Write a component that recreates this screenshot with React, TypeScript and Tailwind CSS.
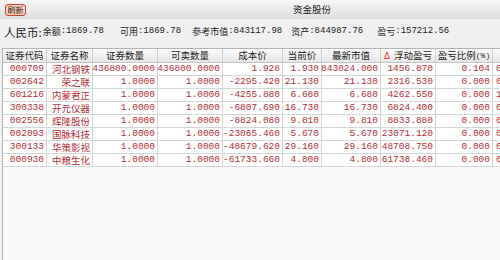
import React from 'react';

type Row = {
  code: string;
  name: string;
  qty: string;
  sellable: string;
  cost: string;
  price: string;
  value: string;
  pnl: string;
  ratio: string;
  market: string;
};

const ROWS: Row[] = [
  { code: '000709', name: '河北钢铁', qty: '436800.0000', sellable: '436800.0000', cost: '1.928', price: '1.930', value: '843024.000', pnl: '1456.870', ratio: '0.104', market: '0' },
  { code: '002642', name: '荣之联', qty: '1.0000', sellable: '1.0000', cost: '-2295.420', price: '21.130', value: '21.130', pnl: '2316.530', ratio: '0.000', market: '0' },
  { code: '601216', name: '内蒙君正', qty: '1.0000', sellable: '1.0000', cost: '-4255.880', price: '6.680', value: '6.680', pnl: '4262.550', ratio: '0.000', market: '1' },
  { code: '300338', name: '开元仪器', qty: '1.0000', sellable: '1.0000', cost: '-6807.690', price: '16.730', value: '16.730', pnl: '6824.400', ratio: '0.000', market: '0' },
  { code: '002556', name: '辉隆股份', qty: '1.0000', sellable: '1.0000', cost: '-8824.080', price: '9.810', value: '9.810', pnl: '8833.880', ratio: '0.000', market: '0' },
  { code: '002093', name: '国脉科技', qty: '1.0000', sellable: '1.0000', cost: '-23065.460', price: '5.670', value: '5.670', pnl: '23071.120', ratio: '0.000', market: '0' },
  { code: '300133', name: '华策影视', qty: '1.0000', sellable: '1.0000', cost: '-48679.620', price: '29.160', value: '29.160', pnl: '48708.750', ratio: '0.000', market: '0' },
  { code: '000930', name: '中粮生化', qty: '1.0000', sellable: '1.0000', cost: '-61733.660', price: '4.800', value: '4.800', pnl: '61738.460', ratio: '0.000', market: '0' },
];

const CJK = "font-['Noto_Sans_CJK_SC','Noto_Sans',sans-serif]";
const MONO = "font-['Liberation_Mono','Noto_Sans_CJK_SC',monospace]";

// column widths, left to right
const W = ['w-[44px]', 'w-[46px]', 'w-[65px]', 'w-[65px]', 'w-[60px]', 'w-[39px]', 'w-[59px]', 'w-[55px]', 'w-[57px]', 'w-[48px]'];

const HeadCell: React.FC<{ w: string; children?: React.ReactNode }> = ({ w, children }) => (
  <div className={`${w} shrink-0 h-full flex items-center justify-center border-r border-[#cfcfcf] text-[9.5px] text-[#222] ${CJK}`}>
    {children}
  </div>
);

const Cell: React.FC<{ w: string; cjk?: boolean; left?: boolean; children?: React.ReactNode }> = ({ w, cjk, left, children }) => (
  <div
    className={`${w} shrink-0 h-full flex items-center ${left ? 'justify-start pl-[3px]' : 'justify-end pr-[2px]'} border-r border-[#d6d6d6] text-[#b0303a] ${
      cjk ? `${CJK} text-[9.5px]` : `${MONO} text-[9.5px]`
    }`}
  >
    {children}
  </div>
);

export default function App() {
  return (
    <div className="w-[500px] h-[260px] overflow-hidden bg-[#f0f0f0] flex flex-col">
      {/* title bar */}
      <div className="h-[19px] shrink-0 flex items-center pl-[5px] bg-gradient-to-b from-[#f7f7f7] to-[#dedede]">
        <button className={`w-[21px] h-[12px] rounded-[3px] border border-[#d0402a] bg-[#f6d2c4] flex items-center justify-center text-[8px] leading-none text-[#3a1a10] ${CJK}`}>
          刷新
        </button>
        <div className={`ml-[267px] text-[9.5px] text-[#222] ${CJK}`}>资金股份</div>
      </div>

      {/* balance line */}
      <div className="h-[29px] shrink-0 flex items-start pt-[6px] pl-[4px] text-[#222]">
        <span className={`text-[11.5px] leading-[14px] ${CJK}`}>人民币:</span>
        <div className="flex items-center h-[14px] text-[9px]">
          <span className={`ml-[1px] ${CJK}`}>余额</span>
          <span className={MONO}>:1869.78</span>
          <span className={`ml-[16px] ${CJK}`}>可用</span>
          <span className={MONO}>:1869.78</span>
          <span className={`ml-[11px] ${CJK}`}>参考市值</span>
          <span className={MONO}>:843117.98</span>
          <span className={`ml-[9px] ${CJK}`}>资产</span>
          <span className={MONO}>:844987.76</span>
          <span className={`ml-[14px] ${CJK}`}>盈亏</span>
          <span className={MONO}>:157212.56</span>
        </div>
      </div>

      {/* grid */}
      <div className="flex-1 ml-[2px] border-l border-t border-[#b4b4b4] bg-[#fafafa] flex flex-col">
        <div className="h-[14px] shrink-0 flex bg-gradient-to-b from-[#fbfbfb] to-[#e6e6e6] border-b border-[#c4c4c4]">
          <HeadCell w={W[0]}>证券代码</HeadCell>
          <HeadCell w={W[1]}>证券名称</HeadCell>
          <HeadCell w={W[2]}>证券数量</HeadCell>
          <HeadCell w={W[3]}>可卖数量</HeadCell>
          <HeadCell w={W[4]}>成本价</HeadCell>
          <HeadCell w={W[5]}>当前价</HeadCell>
          <HeadCell w={W[6]}>最新市值</HeadCell>
          <HeadCell w={W[7]}>
            <span className="text-[#e02020] mr-[4px] text-[9px]">Δ</span>浮动盈亏
          </HeadCell>
          <HeadCell w={W[8]}>
            盈亏比例<span className={`${MONO} text-[8px]`}>(%)</span>
          </HeadCell>
          <HeadCell w={W[9]} />
        </div>
        {ROWS.map((r) => (
          <div key={r.code} className="h-[13px] shrink-0 flex bg-white border-b border-[#d6d6d6]">
            <Cell w={W[0]}>{r.code}</Cell>
            <Cell w={W[1]} cjk>
              {r.name}
            </Cell>
            <Cell w={W[2]}>{r.qty}</Cell>
            <Cell w={W[3]}>{r.sellable}</Cell>
            <Cell w={W[4]}>{r.cost}</Cell>
            <Cell w={W[5]}>{r.price}</Cell>
            <Cell w={W[6]}>{r.value}</Cell>
            <Cell w={W[7]}>{r.pnl}</Cell>
            <Cell w={W[8]}>{r.ratio}</Cell>
            <Cell w={W[9]} left>
              {r.market}
            </Cell>
          </div>
        ))}
      </div>
    </div>
  );
}
